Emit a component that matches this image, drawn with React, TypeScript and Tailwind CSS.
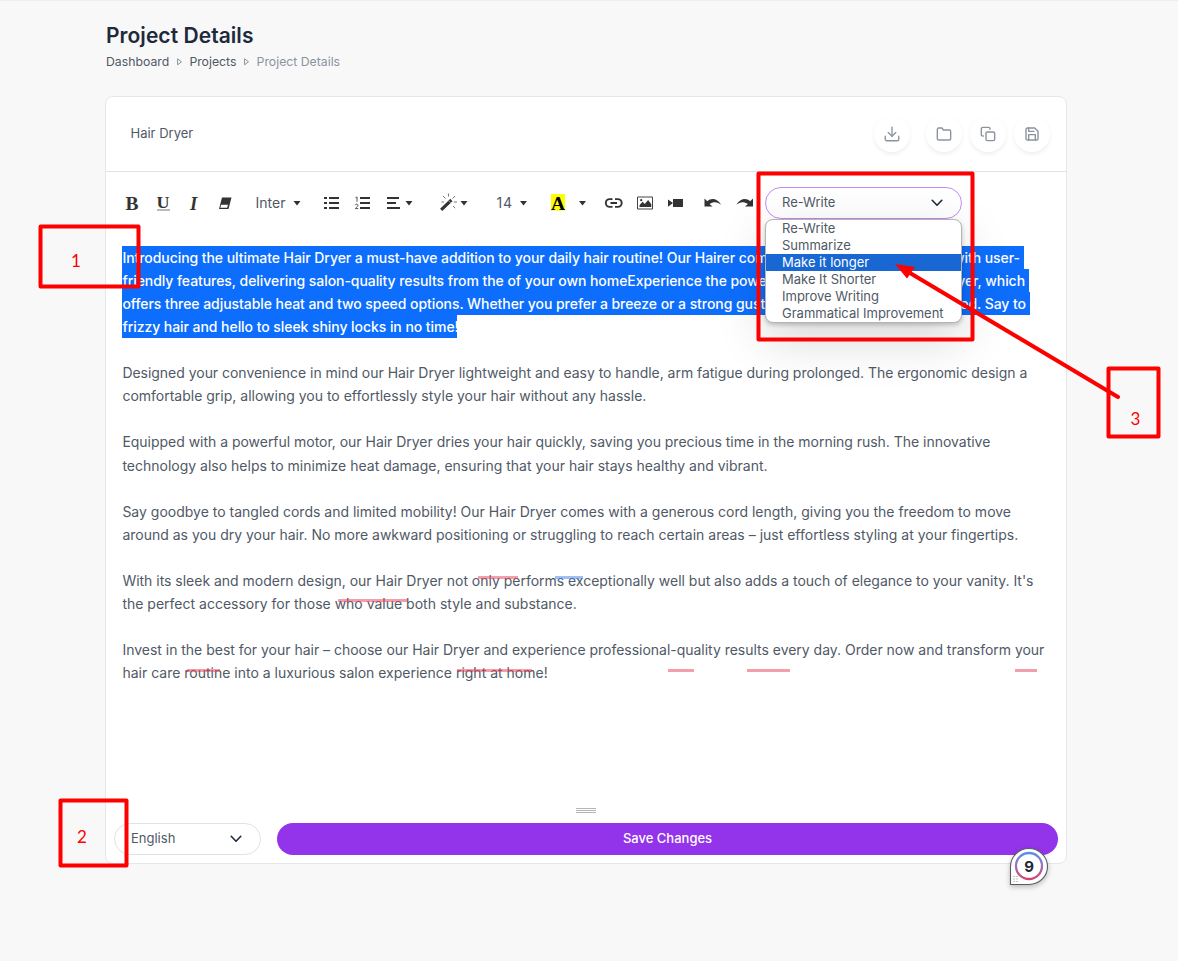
import React from "react";
import { Download } from "lucide-react";

const selected = [
  { start: "Introducing the ultimate Hair Dryer a must-have addition to your daily hair routine! Our Hairer com", end: "with user-", width: "w-[902px]" },
  { start: "friendly features, delivering salon-quality results from the of your own homeExperience the power", end: "yer, which", width: "w-[907px]" },
  { start: "offers three adjustable heat and two speed options. Whether you prefer a breeze or a strong gust", end: "ed. Say to", width: "w-[908px]" },
  { start: "frizzy hair and hello to sleek shiny locks in no time!", end: "", width: "w-[335px]" },
];

const paragraphs = [
  {
    spacing: "tracking-[-0.03px]",
    lines: [
      "Designed your convenience in mind our Hair Dryer lightweight and easy to handle, arm fatigue during prolonged. The ergonomic design a",
      "comfortable grip, allowing you to effortlessly style your hair without any hassle.",
    ],
  },
  {
    spacing: "tracking-[-0.025px]",
    lines: [
      "Equipped with a powerful motor, our Hair Dryer dries your hair quickly, saving you precious time in the morning rush. The innovative",
      "technology also helps to minimize heat damage, ensuring that your hair stays healthy and vibrant.",
    ],
  },
  {
    spacing: "tracking-normal",
    lines: [
      "Say goodbye to tangled cords and limited mobility! Our Hair Dryer comes with a generous cord length, giving you the freedom to move",
      "around as you dry your hair. No more awkward positioning or struggling to reach certain areas – just effortless styling at your fingertips.",
    ],
  },
  {
    spacing: "tracking-[-0.018px]",
    lines: [
      "With its sleek and modern design, our Hair Dryer not only performs exceptionally well but also adds a touch of elegance to your vanity. It's",
      "the perfect accessory for those who value both style and substance.",
    ],
  },
  {
    spacing: "tracking-[-0.018px]",
    lines: [
      "Invest in the best for your hair – choose our Hair Dryer and experience professional-quality results every day. Order now and transform your",
      "hair care routine into a luxurious salon experience right at home!",
    ],
  },
];

const options = ["Re-Write", "Summarize", "Make it longer", "Make It Shorter", "Improve Writing", "Grammatical Improvement"];

function Crumb() {
  return (
    <svg width="5" height="8" viewBox="0 0 5 8" className="mx-[7.6px] shrink-0">
      <path d="M.6.8v6L4.500 3.800z" fill="none" stroke="#7f8894" strokeWidth=".9" />
    </svg>
  );
}

function Chevron() {
  return (
    <svg width="12" height="8" viewBox="0 0 12 8" className="shrink-0">
      <path d="M1.2 1.3 6 6.2l4.8-4.9" fill="none" stroke="#1f2937" strokeWidth="1.6" strokeLinecap="round" strokeLinejoin="round" />
    </svg>
  );
}

function LineIcon({ children }: { children: React.ReactNode }) {
  return (
    <svg width="16" height="16" viewBox="0 0 24 24" fill="none" stroke="currentColor" strokeWidth="2.100" strokeLinecap="round" strokeLinejoin="round">
      {children}
    </svg>
  );
}

function RoundButton({ children }: { children: React.ReactNode }) {
  return (
    <div className="flex size-9 items-center justify-center rounded-full bg-white text-[#8b949e] shadow-[0_2px_4px_rgba(0,0,0,0.07)]">
      {children}
    </div>
  );
}

function Toolbar() {
  return (
    <svg width="640" height="30" viewBox="120 188 640 30" fill="#333" className="shrink-0">
      <g fontFamily="Liberation Serif, serif" fontSize="18.500" fontWeight="700" fill="#333">
        <text x="125.500" y="209.500" textLength="13" lengthAdjust="spacingAndGlyphs">B</text>
        <text x="156.500" y="208" fontSize="17" textLength="13" lengthAdjust="spacingAndGlyphs">U</text>
        <text x="190" y="209.500" fontStyle="italic">I</text>
      </g>
      <path d="M157 209.500h13v1h-13z" fill="#777" />
      <path d="M222 197.500h9.500l-3 11.500h-9.500zM221.200 204.700l-.9 3h6.800l.9-3z" fillRule="evenodd" />
      <g fontFamily="Inter, sans-serif" fontSize="14" fontWeight="400" fill="#505966">
        <text x="255.500" y="208" textLength="30">Inter</text>
        <text x="496.500" y="208" textLength="15.500">14</text>
      </g>
      <path d="M293.500 201h7l-3.500 4.500zM405.500 201h7l-3.500 4.500zM460.500 201h7l-3.500 4.500zM520 201h7l-3.500 4.500zM579 201h7l-3.500 4.500z" />
      <path d="M324 197h3v2h-3zm0 5h3v2h-3zm0 5h3v2h-3zM329 197h10v2h-10zm0 5h10v2h-10zm0 5h10v2h-10z" />
      <path d="M360 197h10v2h-10zm0 5h10v2h-10zm0 5h10v2h-10z" />
      <path d="m355.500 197.800 1.500-.9v4.900M355.300 205.100c.3-1.500 2.800-1.300 2.600.3-.1 1-1.700 2.100-2.500 3.200h2.900" fill="none" stroke="#444" strokeWidth=".9" />
      <path d="M387 197h12v2h-12zm0 5h9v2h-9zm0 5h13v2h-13z" />
      <path d="m441.200 209.800 8.300-8" stroke="#333" strokeWidth="3.200" fill="none" />
      <path d="m448.900 202.400 2.500-2.400" stroke="#333" strokeWidth="3.200" fill="none" />
      <path d="m448.600 200.700 2 2" stroke="#fff" strokeWidth=".6" />
      <path d="M448.500 193.500v3M443 196l2.500 2.500M455 196l-2.500 2.500M453.800 202h3.200M441.500 202h2.500M453 206l2.200 2.200" stroke="#777" strokeWidth="1" fill="none" />
      <path d="M551 194h14v16.500h-14z" fill="#ff0" />
      <text x="551" y="209.500" fontFamily="Liberation Serif, serif" fontSize="19.500" fontWeight="700" fill="#000">A</text>
      <path d="M612.500 199.100h-2.800a3.900 3.900 0 0 0 0 7.800h2.800M615 199.100h2.800a3.900 3.900 0 0 1 0 7.800H615M610.500 203h6.500" fill="none" stroke="#333" strokeWidth="1.900" />
      <path d="M637.500 197h15v12h-15z" fill="none" stroke="#444" strokeWidth="1" />
      <path d="m639.500 207 .1-2 3-3.300 2.200 2.300 3.300-4 3.200 4.200v2.800z" />
      <circle cx="641.200" cy="200.200" r="1.100" />
      <path d="M673 199h10v8h-10zM668 199.500l5 3.600-5 3.700z" />
      <path d="M704.500 198.500v8h8l-2.900-2.500c3.600-2.600 7.900-2.500 11.600.7-3.800-6.200-9.800-7.100-13.900-3.500z" />
      <path d="M753 198.500v8h-8l2.900-2.500c-3.600-2.600-7.900-2.500-11.600.7 3.800-6.200 9.800-7.100 13.900-3.500z" />
    </svg>
  );
}

export default function App() {
  return (
    <div className="relative h-[961px] w-[1178px] overflow-hidden border-t border-[#eeeeee] bg-[#f8f8f8] pl-[105px] font-['Inter',sans-serif] font-normal text-[#505966]">
      <h1 className="mt-[22px] pl-[1px] text-[21px] leading-[26px] font-semibold tracking-[0.05px] text-[#1e293b]">Project Details</h1>
      <nav className="mt-[3px] flex h-5 items-center pl-[1px] text-[12.25px] leading-5">
        <span>Dashboard</span>
        <Crumb />
        <span>Projects</span>
        <Crumb />
        <span className="text-[#8b93a3]">Project Details</span>
      </nav>

      <main className="mt-[24px] flex h-[768px] w-[962px] flex-col rounded-lg border border-[#e5e7eb] bg-white">
        <header className="flex h-[75px] shrink-0 items-center border-b border-[#e0e2e6] pr-[16px] pl-[24.5px]">
          <span className="flex-1 text-[13px]">Hair Dryer</span>
          <div className="flex items-center">
            <RoundButton><Download size={18} strokeWidth={1.8} /></RoundButton>
            <div className="ml-4 flex gap-2">
              <RoundButton>
                <LineIcon><path d="M22 19a2 2 0 0 1-2 2H4a2 2 0 0 1-2-2V5a2 2 0 0 1 2-2h5l2 3h9a2 2 0 0 1 2 2z" /></LineIcon>
              </RoundButton>
              <RoundButton>
                <LineIcon>
                  <rect x="9" y="9" width="13" height="13" rx="2" />
                  <path d="M5 15H4a2 2 0 0 1-2-2V4a2 2 0 0 1 2-2h9a2 2 0 0 1 2 2v1" />
                </LineIcon>
              </RoundButton>
              <RoundButton>
                <LineIcon>
                  <path d="M19 21H5a2 2 0 0 1-2-2V5a2 2 0 0 1 2-2h11l5 5v11a2 2 0 0 1-2 2z" />
                  <path d="M17 21v-8H7v8M7 3v5h8" />
                </LineIcon>
              </RoundButton>
            </div>
          </div>
        </header>

        <div className="flex h-[62px] shrink-0 items-center pl-[14px]">
          <Toolbar />
          <div className="relative ml-[5px] h-8 w-[197px] rounded-full border border-[#c38bf5] bg-white">
            <div className="flex h-full items-center justify-between pr-[18px] pl-4 text-[13px]">
              <span>Re-Write</span>
              <Chevron />
            </div>
            <div className="absolute top-[31px] left-[-1px] z-10 h-[104px] w-[197px] rounded-lg border border-[#b4b4b4] bg-white text-[13px] leading-[17px] shadow-[0_16px_50px_rgba(0,0,0,0.16),0_2px_4px_rgba(0,0,0,0.2)]">
              {options.map((o, i) => (
                <div key={o} className={i === 2 ? "h-[17px] bg-[#1967d2] pl-4 text-white" : "h-[17px] pl-4"}>{o}</div>
              ))}
            </div>
          </div>
        </div>

        <article className="flex-1 pt-[11.7px] pl-4 text-[14px] leading-[23.1px] whitespace-nowrap">
          <div className="font-[450] tracking-[-0.06px] text-white">
            {selected.map((line) => (
              <div key={line.start} className={"flex h-[23.1px] justify-between bg-[#0d6efd] pr-1 pl-[0.4px] " + line.width}>
                <span>{line.start}</span>
                <span>{line.end}</span>
              </div>
            ))}
          </div>
          {paragraphs.map((p) => (
            <div key={p.lines[0]} className="mt-[23.1px] pl-[0.4px]">
              {p.lines.map((line, i) => (
                <div key={line} className={i === 0 ? "h-[23.1px] " + p.spacing : "h-[23.1px]"}>{line}</div>
              ))}
            </div>
          ))}
        </article>

        <div className="flex h-[15px] shrink-0 flex-col items-center gap-px">
          <i className="h-px w-5 bg-[#b5b5b5]" />
          <i className="h-px w-5 bg-[#b5b5b5]" />
          <i className="h-px w-5 bg-[#b5b5b5]" />
        </div>
        <footer className="mb-2 flex h-8 shrink-0 gap-4 px-2 text-[13px]">
          <div className="flex w-[147px] items-center justify-between rounded-full border border-[#dfe2e6] pr-[18px] pl-4">
            <span>English</span>
            <Chevron />
          </div>
          <button className="flex-1 rounded-full bg-[#9333ea] font-medium text-white">Save Changes</button>
        </footer>
      </main>

      <svg width="1178" height="961" viewBox="0 0 1178 961" className="pointer-events-none absolute top-[-1px] left-0 z-20">
        <defs>
          <linearGradient id="ring" x1="0" y1="0" x2="0" y2="1">
            <stop offset="0" stopColor="#5b8def" />
            <stop offset=".5" stopColor="#9b72bd" />
            <stop offset="1" stopColor="#d0456b" />
          </linearGradient>
          <filter id="drop" x="-30%" y="-30%" width="160%" height="170%">
            <feDropShadow dx="0" dy="2" stdDeviation="2.5" floodOpacity=".25" />
          </filter>
        </defs>
        <path d="M478 577.500h40M338 600.500h70M187 670.500h33M457 670.500h75M668 670.500h26M747 670.500h43M1015 670.500h22" stroke="#ea3d58" strokeOpacity=".5" strokeWidth="3" />
        <path d="M555 577.500h28" stroke="#4080f0" strokeOpacity=".5" strokeWidth="3" />
        <path d="M1010.500 884.500v-18a18.500 18 0 1 1 18.500 18z" fill="#fff" stroke="#585b63" strokeWidth="1.100" filter="url(#drop)" />
        <circle cx="1029" cy="866" r="13" fill="#fff" stroke="url(#ring)" strokeWidth="2.300" />
        <text x="1029" y="871.500" textAnchor="middle" fontFamily="Inter, sans-serif" fontSize="15" fontWeight="700" fill="#1f2937">9</text>
        <path d="M1013.500 876.500h1m2 0h1m-4 2.500h1m2 0h1m-4 2.500h1m2 0h1" stroke="#888" strokeWidth="1" />
        <g fill="none" stroke="#ff0000" strokeWidth="4" strokeLinejoin="round" strokeLinecap="round">
          <path d="M40.500 226.500h98v60h-98zM60.500 800.500h66v65h-66zM758.500 173.500h214v166h-214zM1108.500 368.500h50v68h-50z" />
          <path d="m1118 397-208-124" />
        </g>
        <path d="m895 264 20 3-8 11.500z" fill="#ff0000" />
        <g fontFamily="Lato, sans-serif" fontSize="17" fontWeight="400" fill="#ff0000" textAnchor="middle">
          <text x="76" y="267">1</text>
          <text x="82" y="843">2</text>
          <text x="1135.500" y="425">3</text>
        </g>
      </svg>
    </div>
  );
}
